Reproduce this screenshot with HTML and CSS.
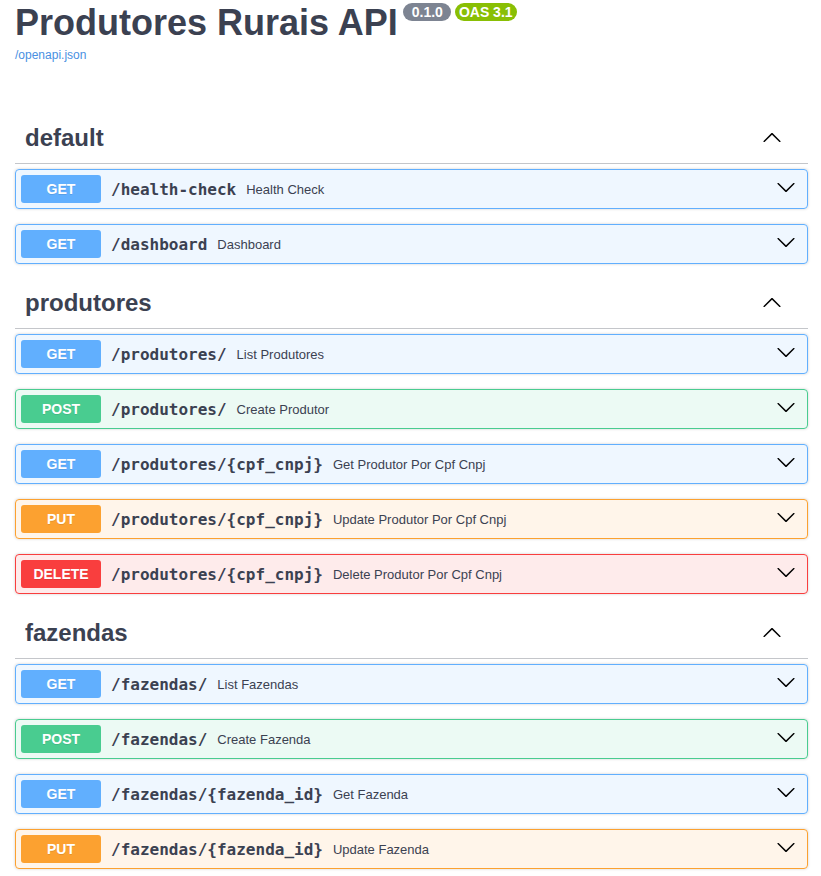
FILE: index.html
```html
<!DOCTYPE html>
<html lang="en">
<head>
<meta charset="utf-8">
<title>Produtores Rurais API</title>
<link rel="stylesheet" href="styles.css">
</head>
<body>
<div class="page">
  <header class="info">
    <div class="title-row">
      <h1 class="title">Produtores Rurais API</h1>
      <div class="badges">
        <span class="pill pill-version">0.1.0</span>
        <span class="pill pill-oas">OAS 3.1</span>
      </div>
    </div>
    <a class="spec-link" href="#">/openapi.json</a>
  </header>

  <main class="ops">
    <section class="tag-section">
      <h3 class="tag">
        <span class="tag-name">default</span>
        <button class="expand"><svg class="arrow" width="20" height="20" viewBox="0 0 20 20"><path d="M17.418 14.908c.272.268.709.268.979 0s.271-.701 0-.969l-7.908-7.83c-.27-.268-.707-.268-.979 0l-7.908 7.83c-.27.268-.27.701 0 .969.271.268.709.268.979 0L10 7.767l7.418 7.141z"/></svg></button>
      </h3>
      <div class="opblock get"><span class="method">GET</span><span class="path">/health-check</span><span class="desc">Health Check</span><button class="ctl"><svg class="arrow" width="20" height="20" viewBox="0 0 20 20"><path d="M17.418 6.109c.272-.268.709-.268.979 0s.271.701 0 .969l-7.908 7.83c-.27.268-.707.268-.979 0l-7.908-7.83c-.27-.268-.27-.701 0-.969.271-.268.709-.268.979 0L10 13.25l7.418-7.141z"/></svg></button></div>
      <div class="opblock get"><span class="method">GET</span><span class="path">/dashboard</span><span class="desc">Dashboard</span><button class="ctl"><svg class="arrow" width="20" height="20" viewBox="0 0 20 20"><path d="M17.418 6.109c.272-.268.709-.268.979 0s.271.701 0 .969l-7.908 7.83c-.27.268-.707.268-.979 0l-7.908-7.83c-.27-.268-.27-.701 0-.969.271-.268.709-.268.979 0L10 13.25l7.418-7.141z"/></svg></button></div>
    </section>

    <section class="tag-section">
      <h3 class="tag">
        <span class="tag-name">produtores</span>
        <button class="expand"><svg class="arrow" width="20" height="20" viewBox="0 0 20 20"><path d="M17.418 14.908c.272.268.709.268.979 0s.271-.701 0-.969l-7.908-7.83c-.27-.268-.707-.268-.979 0l-7.908 7.83c-.27.268-.27.701 0 .969.271.268.709.268.979 0L10 7.767l7.418 7.141z"/></svg></button>
      </h3>
      <div class="opblock get"><span class="method">GET</span><span class="path">/produtores/</span><span class="desc">List Produtores</span><button class="ctl"><svg class="arrow" width="20" height="20" viewBox="0 0 20 20"><path d="M17.418 6.109c.272-.268.709-.268.979 0s.271.701 0 .969l-7.908 7.83c-.27.268-.707.268-.979 0l-7.908-7.83c-.27-.268-.27-.701 0-.969.271-.268.709-.268.979 0L10 13.25l7.418-7.141z"/></svg></button></div>
      <div class="opblock post"><span class="method">POST</span><span class="path">/produtores/</span><span class="desc">Create Produtor</span><button class="ctl"><svg class="arrow" width="20" height="20" viewBox="0 0 20 20"><path d="M17.418 6.109c.272-.268.709-.268.979 0s.271.701 0 .969l-7.908 7.83c-.27.268-.707.268-.979 0l-7.908-7.83c-.27-.268-.27-.701 0-.969.271-.268.709-.268.979 0L10 13.25l7.418-7.141z"/></svg></button></div>
      <div class="opblock get"><span class="method">GET</span><span class="path">/produtores/{cpf_cnpj}</span><span class="desc">Get Produtor Por Cpf Cnpj</span><button class="ctl"><svg class="arrow" width="20" height="20" viewBox="0 0 20 20"><path d="M17.418 6.109c.272-.268.709-.268.979 0s.271.701 0 .969l-7.908 7.83c-.27.268-.707.268-.979 0l-7.908-7.83c-.27-.268-.27-.701 0-.969.271-.268.709-.268.979 0L10 13.25l7.418-7.141z"/></svg></button></div>
      <div class="opblock put"><span class="method">PUT</span><span class="path">/produtores/{cpf_cnpj}</span><span class="desc">Update Produtor Por Cpf Cnpj</span><button class="ctl"><svg class="arrow" width="20" height="20" viewBox="0 0 20 20"><path d="M17.418 6.109c.272-.268.709-.268.979 0s.271.701 0 .969l-7.908 7.83c-.27.268-.707.268-.979 0l-7.908-7.83c-.27-.268-.27-.701 0-.969.271-.268.709-.268.979 0L10 13.25l7.418-7.141z"/></svg></button></div>
      <div class="opblock delete"><span class="method">DELETE</span><span class="path">/produtores/{cpf_cnpj}</span><span class="desc">Delete Produtor Por Cpf Cnpj</span><button class="ctl"><svg class="arrow" width="20" height="20" viewBox="0 0 20 20"><path d="M17.418 6.109c.272-.268.709-.268.979 0s.271.701 0 .969l-7.908 7.83c-.27.268-.707.268-.979 0l-7.908-7.83c-.27-.268-.27-.701 0-.969.271-.268.709-.268.979 0L10 13.25l7.418-7.141z"/></svg></button></div>
    </section>

    <section class="tag-section">
      <h3 class="tag">
        <span class="tag-name">fazendas</span>
        <button class="expand"><svg class="arrow" width="20" height="20" viewBox="0 0 20 20"><path d="M17.418 14.908c.272.268.709.268.979 0s.271-.701 0-.969l-7.908-7.83c-.27-.268-.707-.268-.979 0l-7.908 7.83c-.27.268-.27.701 0 .969.271.268.709.268.979 0L10 7.767l7.418 7.141z"/></svg></button>
      </h3>
      <div class="opblock get"><span class="method">GET</span><span class="path">/fazendas/</span><span class="desc">List Fazendas</span><button class="ctl"><svg class="arrow" width="20" height="20" viewBox="0 0 20 20"><path d="M17.418 6.109c.272-.268.709-.268.979 0s.271.701 0 .969l-7.908 7.83c-.27.268-.707.268-.979 0l-7.908-7.83c-.27-.268-.27-.701 0-.969.271-.268.709-.268.979 0L10 13.25l7.418-7.141z"/></svg></button></div>
      <div class="opblock post"><span class="method">POST</span><span class="path">/fazendas/</span><span class="desc">Create Fazenda</span><button class="ctl"><svg class="arrow" width="20" height="20" viewBox="0 0 20 20"><path d="M17.418 6.109c.272-.268.709-.268.979 0s.271.701 0 .969l-7.908 7.83c-.27.268-.707.268-.979 0l-7.908-7.83c-.27-.268-.27-.701 0-.969.271-.268.709-.268.979 0L10 13.25l7.418-7.141z"/></svg></button></div>
      <div class="opblock get"><span class="method">GET</span><span class="path">/fazendas/{fazenda_id}</span><span class="desc">Get Fazenda</span><button class="ctl"><svg class="arrow" width="20" height="20" viewBox="0 0 20 20"><path d="M17.418 6.109c.272-.268.709-.268.979 0s.271.701 0 .969l-7.908 7.83c-.27.268-.707.268-.979 0l-7.908-7.83c-.27-.268-.27-.701 0-.969.271-.268.709-.268.979 0L10 13.25l7.418-7.141z"/></svg></button></div>
      <div class="opblock put"><span class="method">PUT</span><span class="path">/fazendas/{fazenda_id}</span><span class="desc">Update Fazenda</span><button class="ctl"><svg class="arrow" width="20" height="20" viewBox="0 0 20 20"><path d="M17.418 6.109c.272-.268.709-.268.979 0s.271.701 0 .969l-7.908 7.83c-.27.268-.707.268-.979 0l-7.908-7.83c-.27-.268-.27-.701 0-.969.271-.268.709-.268.979 0L10 13.25l7.418-7.141z"/></svg></button></div>
    </section>
  </main>
</div>
</body>
</html>
```

FILE: styles.css
```css
html, body {
  margin: 0;
  padding: 0;
  background: #fff;
}

body {
  font-family: "Liberation Sans", Arial, sans-serif;
  color: #3b4151;
}

.page {
  padding: 2px 13px 0 15px;
}

.title-row {
  display: flex;
  align-items: flex-start;
}

.title {
  margin: 0;
  font-size: 36px;
  line-height: 41px;
  font-weight: 700;
  color: #3b4151;
}

.badges {
  display: flex;
  gap: 4px;
  margin: 1px 0 0 5px;
}

.pill {
  display: block;
  height: 18px;
  line-height: 18px;
  font-size: 14px;
  font-weight: 700;
  color: #fff;
  border-radius: 57px;
}

.pill-version {
  background: #7d8492;
  padding: 0 8px 0 9px;
}

.pill-oas {
  background: #89bf04;
  padding: 0 4px;
}

.spec-link {
  display: block;
  margin-top: 5px;
  font-size: 12px;
  line-height: 14px;
  color: #4990e2;
  text-decoration: none;
  width: max-content;
}

.ops {
  margin-top: 52px;
}

.tag-section {
  display: flex;
  flex-direction: column;
}

.tag {
  display: flex;
  align-items: center;
  margin: 0 0 5px;
  padding: 10px 16px 10px 10px;
  height: 29px;
  border-bottom: 1px solid rgba(59, 65, 81, 0.3);
  font-size: 24px;
  line-height: 28px;
  font-weight: 700;
  color: #3b4151;
}

.tag-name {
  flex: 1;
  margin-bottom: 1px;
}

.expand {
  display: flex;
  border: none;
  background: none;
  padding: 0 10px;
  margin: 0 0 4px;
  cursor: pointer;
}

.ctl {
  display: flex;
  border: none;
  background: none;
  padding: 0 6px 0 10px;
  margin: 0 0 5px auto;
  cursor: pointer;
}

.arrow {
  display: block;
  fill: #000;
}

.opblock {
  display: flex;
  align-items: center;
  margin: 0 0 15px;
  padding: 5px;
  border: 1px solid;
  border-radius: 4px;
  box-shadow: 0 0 3px rgba(0, 0, 0, 0.19);
}

.method {
  min-width: 80px;
  padding: 6px 0;
  font-size: 14px;
  line-height: 16px;
  font-weight: 700;
  text-align: center;
  color: #fff;
  border-radius: 3px;
  text-shadow: 0 1px 0 rgba(0, 0, 0, 0.1);
}

.path {
  padding: 0 10px;
  font-family: "DejaVu Sans Mono", monospace;
  font-size: 16px;
  font-weight: 700;
  color: #3b4151;
}

.desc {
  font-size: 13px;
  color: #3b4151;
}

.get { background: rgba(97, 175, 254, 0.1); border-color: #61affe; }
.get .method { background: #61affe; }

.post { background: rgba(73, 204, 144, 0.1); border-color: #49cc90; }
.post .method { background: #49cc90; }

.put { background: rgba(252, 161, 48, 0.1); border-color: #fca130; }
.put .method { background: #fca130; }

.delete { background: rgba(249, 62, 62, 0.1); border-color: #f93e3e; }
.delete .method { background: #f93e3e; }
```
